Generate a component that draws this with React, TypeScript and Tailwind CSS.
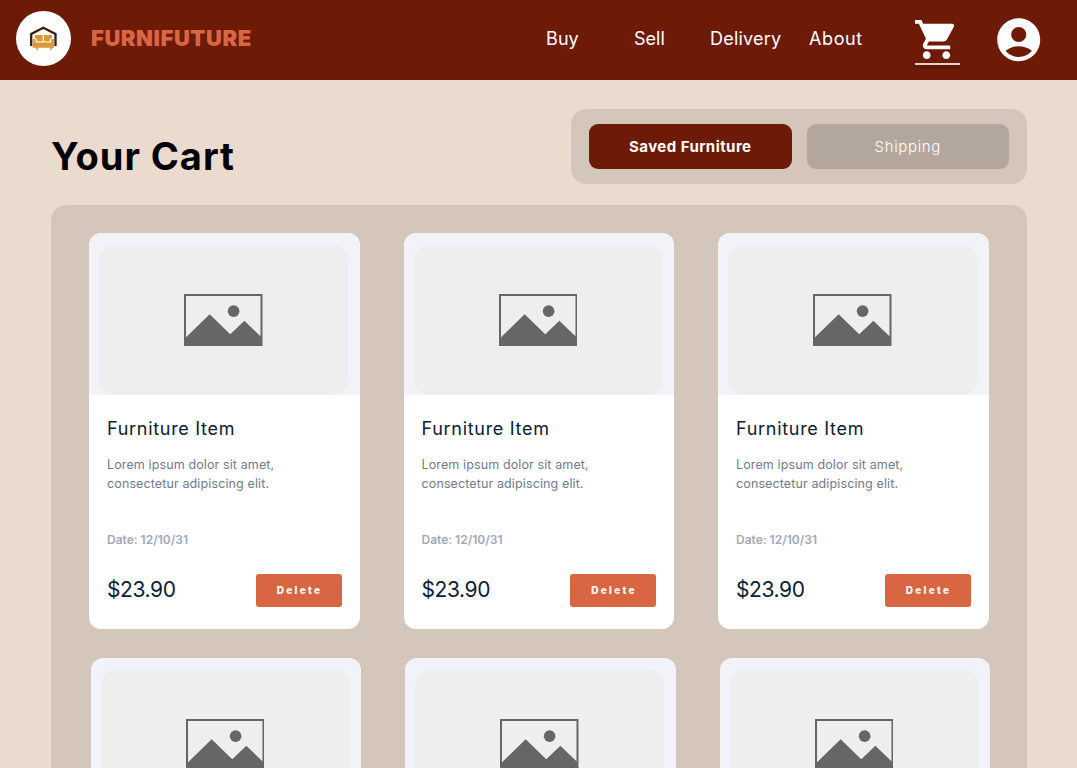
import { MdAccountCircle, MdShoppingCart } from "react-icons/md";

function Logo() {
  return (
    <div className="ml-4 mt-[11px] h-[55px] w-[55px] shrink-0 rounded-full bg-white">
      <svg viewBox="0 0 55 55" className="h-full w-full">
        <path d="M15.2 35V23L27.3 16.8L39.5 23V35" fill="none" stroke="#3a1d0c" strokeWidth="2.3" />
        <path
          d="M18.6 24h8.1v6.6h-5.8v-2.6L18.6 27zM27.9 24h8.1v3l-2.2 1v2.6h-5.9z M17.2 28.1h2.4v3.5h15.5v-3.5h2.4a.6.6 0 0 1 .6.6v8.1h-2.2v2h-1.8v-2H22v2h-1.8v-2h-3.6v-8.1a.6.6 0 0 1 .6-.6z"
          fill="#dc9935"
        />
      </svg>
    </div>
  );
}

function Header() {
  return (
    <header className="flex h-[79.5px] shrink-0 items-start bg-[#6d1a07] text-white">
      <Logo />
      <div className="ml-[20px] mt-[22px] w-[455px] text-[22px] font-black leading-8 tracking-[0.55px] text-[#d96642]">
        FURNIFUTURE
      </div>
      <nav className="mt-[22.5px] flex text-[18px] leading-8">
        <a className="w-[88px] tracking-[0.1px]">Buy</a>
        <a className="w-[76px] tracking-[0px]">Sell</a>
        <a className="w-[99px] tracking-[0.2px]">Delivery</a>
        <a className="w-[104px] tracking-[0.6px]">About</a>
      </nav>
      <div className="mt-4 flex h-[49px] w-[47px] flex-col">
        <MdShoppingCart className="h-[47px] w-[47px] shrink-0" />
        <div className="ml-[2px] h-[2px] w-[45px] shrink-0 bg-[#e4d2cd] shadow-[0_3px_3px_rgba(0,0,0,0.25)]" />
      </div>
      <MdAccountCircle className="ml-[33px] mt-[13.5px] h-[51.5px] w-[51.5px] shrink-0" />
    </header>
  );
}

function Placeholder() {
  return (
    <svg viewBox="0 0 78 52" className="h-[52.5px] w-[78.5px]">
      <path d="M1 1h76v50H1z" fill="none" stroke="#666" strokeWidth="2" />
      <circle cx="49.3" cy="17" r="5.8" fill="#666" />
      <path d="M1 44L25.5 20L46 40L60 26.5L77 43V51H1z" fill="#666" />
    </svg>
  );
}

function CardImage() {
  return (
    <div className="h-[162px] w-[270.5px] shrink-0 rounded-t-[12px] bg-[#f2f3f8] pl-[10px] pt-3">
      <div className="flex h-[150px] w-[249px] items-center justify-center rounded-[15px] bg-[#eeeeee]">
        <Placeholder />
      </div>
    </div>
  );
}

function Card() {
  return (
    <article className="h-[396px] w-[270.5px] shrink-0 overflow-hidden rounded-[12px] bg-white">
      <CardImage />
      <div className="px-[18px]">
        <h2 className="pt-[21px] text-[18px] leading-[26px] tracking-[0.7px] text-[#0a2036]">Furniture Item</h2>
        <p className="mt-[14px] whitespace-nowrap text-[12.5px] leading-[18.7px] tracking-[0.12px] text-[#717a8e]">
          Lorem ipsum dolor sit amet,
          <br />
          consectetur adipiscing elit.
        </p>
        <p className="mt-[37.5px] text-[12px] font-semibold leading-[18px] text-[#a0a8b8]">Date: 12/10/31</p>
        <div className="mt-[25px] flex items-center justify-between">
          <span className="text-[21px] leading-[30px] tracking-[-0.4px] text-[#0a2036]">$23.90</span>
          <button className="h-[33px] w-[86px] rounded-[3px] bg-[#d96642] pl-[2px] text-[10px] font-extrabold tracking-[2.3px] text-white">
            Delete
          </button>
        </div>
      </div>
    </article>
  );
}

export default function App() {
  return (
    <div className="flex h-[768px] w-[1077px] flex-col overflow-hidden bg-[#ebdbce] font-['Inter',sans-serif]">
      <Header />
      <main className="flex flex-col pl-[51px] pr-[50px] pt-[29.5px]">
        <div className="flex items-start justify-between">
          <h1 className="mt-[23px] text-[38px] font-bold leading-[48px] tracking-[0.95px] text-black">Your Cart</h1>
          <div className="flex h-[75px] w-[456px] gap-[15px] rounded-[15px] bg-[#d4c6bb] px-[18px] py-[15px]">
            <button className="h-[45px] flex-1 rounded-[9px] bg-[#6d1a07] pt-px text-[15px] font-bold tracking-[0.45px] text-white">
              Saved Furniture
            </button>
            <button className="h-[45px] flex-1 rounded-[9px] bg-[#b3a79d] pt-px text-[15px] font-light tracking-[0.65px] text-white">
              Shipping
            </button>
          </div>
        </div>
        <section className="mt-[21px] h-[563px] rounded-t-[15px] bg-[#d4c6bb] pl-[38px] pt-[28px]">
          <div className="flex gap-[44px]">
            <Card />
            <Card />
            <Card />
          </div>
          <div className="ml-[1.5px] mt-[29px] flex gap-[44px]">
            <CardImage />
            <CardImage />
            <CardImage />
          </div>
        </section>
      </main>
    </div>
  );
}
